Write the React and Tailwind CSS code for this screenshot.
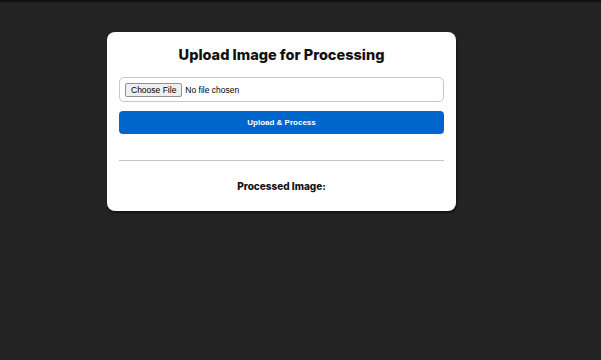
export default function App() {
  return (
    <div className="min-h-[360px] bg-[#232323]">
      <div className="h-[2px] bg-[#121212]" />
      <div
        className="ml-[107px] mt-[30px] w-[349px] rounded-[8px] bg-white px-[12px] pb-[17px] pt-[11px] shadow-[1px_2px_2px_rgba(0,0,0,0.5)]"
        style={{ fontFamily: 'Inter, "Noto Sans", sans-serif' }}
      >
        <h2 className="text-center text-[14.5px] font-extrabold leading-[24px] text-[#111]">
          Upload Image for Processing
        </h2>

        <div className="mt-[10px] flex h-[25px] items-center rounded-[5px] border border-[#c8c8c8] px-[5px]">
          <input
            type="file"
            className="text-[8.5px] text-black file:mr-[3px] file:h-[14px] file:rounded-[2px] file:border file:border-solid file:border-[#8f8f8f] file:bg-[#efefef] file:px-[5px] file:text-[8.5px] file:text-black"
            style={{ fontFamily: '"Liberation Sans", Arial, sans-serif' }}
          />
        </div>

        <button
          type="button"
          className="mt-[9px] flex h-[23px] w-full items-center justify-center rounded-[4px] bg-[#0066cc] text-[8px] font-bold text-white"
          style={{ fontFamily: '"Liberation Sans", Arial, sans-serif' }}
        >
          Upload &amp; Process
        </button>

        <hr className="mt-[26px] border-t border-[#c4c4c4]" />

        <h3 className="mt-[17px] text-center text-[10px] font-extrabold leading-[16px] text-[#111]">
          Processed Image:
        </h3>
      </div>
    </div>
  );
}
